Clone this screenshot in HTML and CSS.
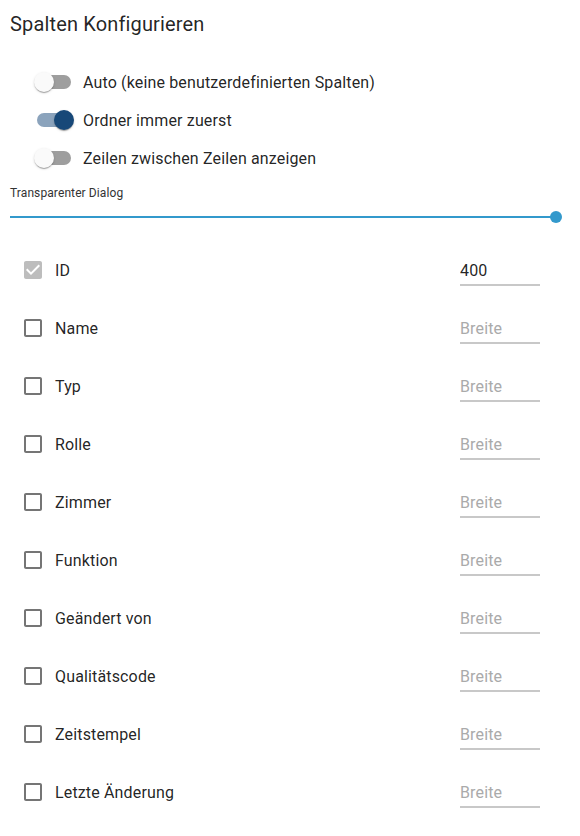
FILE: index.html
```html
<!DOCTYPE html>
<html lang="de">
<head>
    <meta charset="UTF-8">
    <meta name="viewport" content="width=device-width, initial-scale=1.0">
    <title>Spalten Konfigurieren</title>
    <link rel="stylesheet" href="styles.css">
</head>
<body>
    <div class="dialog">
        <h2 class="dialog-title">Spalten Konfigurieren</h2>

        <div class="switches">
            <label class="switch-row">
                <span class="switch"><span class="track"></span><span class="thumb"></span></span>
                <span class="switch-label">Auto (keine benutzerdefinierten Spalten)</span>
            </label>
            <label class="switch-row">
                <span class="switch on"><span class="track"></span><span class="thumb"></span></span>
                <span class="switch-label">Ordner immer zuerst</span>
            </label>
            <label class="switch-row">
                <span class="switch"><span class="track"></span><span class="thumb"></span></span>
                <span class="switch-label">Zeilen zwischen Zeilen anzeigen</span>
            </label>
        </div>

        <div class="slider-block">
            <div class="slider-label">Transparenter Dialog</div>
            <div class="slider">
                <div class="slider-track"></div>
                <span class="slider-thumb"></span>
            </div>
        </div>

        <div class="columns">
            <div class="column-row">
                <svg class="checkbox disabled" viewBox="0 0 24 24"><path d="M19 3H5c-1.11 0-2 .9-2 2v14c0 1.1.89 2 2 2h14c1.11 0 2-.9 2-2V5c0-1.1-.89-2-2-2zm-9 14l-5-5 1.41-1.41L10 14.17l7.59-7.59L19 8l-7 7z"/></svg>
                <span class="column-name">ID</span>
                <div class="width-field"><input type="text" value="400" placeholder="Breite"></div>
            </div>
            <div class="column-row">
                <svg class="checkbox" viewBox="0 0 24 24"><path d="M19 5v14H5V5h14m0-2H5c-1.11 0-2 .9-2 2v14c0 1.1.89 2 2 2h14c1.11 0 2-.9 2-2V5c0-1.1-.89-2-2-2z"/></svg>
                <span class="column-name">Name</span>
                <div class="width-field"><input type="text" placeholder="Breite"></div>
            </div>
            <div class="column-row">
                <svg class="checkbox" viewBox="0 0 24 24"><path d="M19 5v14H5V5h14m0-2H5c-1.11 0-2 .9-2 2v14c0 1.1.89 2 2 2h14c1.11 0 2-.9 2-2V5c0-1.1-.89-2-2-2z"/></svg>
                <span class="column-name">Typ</span>
                <div class="width-field"><input type="text" placeholder="Breite"></div>
            </div>
            <div class="column-row">
                <svg class="checkbox" viewBox="0 0 24 24"><path d="M19 5v14H5V5h14m0-2H5c-1.11 0-2 .9-2 2v14c0 1.1.89 2 2 2h14c1.11 0 2-.9 2-2V5c0-1.1-.89-2-2-2z"/></svg>
                <span class="column-name">Rolle</span>
                <div class="width-field"><input type="text" placeholder="Breite"></div>
            </div>
            <div class="column-row">
                <svg class="checkbox" viewBox="0 0 24 24"><path d="M19 5v14H5V5h14m0-2H5c-1.11 0-2 .9-2 2v14c0 1.1.89 2 2 2h14c1.11 0 2-.9 2-2V5c0-1.1-.89-2-2-2z"/></svg>
                <span class="column-name">Zimmer</span>
                <div class="width-field"><input type="text" placeholder="Breite"></div>
            </div>
            <div class="column-row">
                <svg class="checkbox" viewBox="0 0 24 24"><path d="M19 5v14H5V5h14m0-2H5c-1.11 0-2 .9-2 2v14c0 1.1.89 2 2 2h14c1.11 0 2-.9 2-2V5c0-1.1-.89-2-2-2z"/></svg>
                <span class="column-name">Funktion</span>
                <div class="width-field"><input type="text" placeholder="Breite"></div>
            </div>
            <div class="column-row">
                <svg class="checkbox" viewBox="0 0 24 24"><path d="M19 5v14H5V5h14m0-2H5c-1.11 0-2 .9-2 2v14c0 1.1.89 2 2 2h14c1.11 0 2-.9 2-2V5c0-1.1-.89-2-2-2z"/></svg>
                <span class="column-name">Geändert von</span>
                <div class="width-field"><input type="text" placeholder="Breite"></div>
            </div>
            <div class="column-row">
                <svg class="checkbox" viewBox="0 0 24 24"><path d="M19 5v14H5V5h14m0-2H5c-1.11 0-2 .9-2 2v14c0 1.1.89 2 2 2h14c1.11 0 2-.9 2-2V5c0-1.1-.89-2-2-2z"/></svg>
                <span class="column-name">Qualitätscode</span>
                <div class="width-field"><input type="text" placeholder="Breite"></div>
            </div>
            <div class="column-row">
                <svg class="checkbox" viewBox="0 0 24 24"><path d="M19 5v14H5V5h14m0-2H5c-1.11 0-2 .9-2 2v14c0 1.1.89 2 2 2h14c1.11 0 2-.9 2-2V5c0-1.1-.89-2-2-2z"/></svg>
                <span class="column-name">Zeitstempel</span>
                <div class="width-field"><input type="text" placeholder="Breite"></div>
            </div>
            <div class="column-row">
                <svg class="checkbox" viewBox="0 0 24 24"><path d="M19 5v14H5V5h14m0-2H5c-1.11 0-2 .9-2 2v14c0 1.1.89 2 2 2h14c1.11 0 2-.9 2-2V5c0-1.1-.89-2-2-2z"/></svg>
                <span class="column-name">Letzte Änderung</span>
                <div class="width-field"><input type="text" placeholder="Breite"></div>
            </div>
        </div>
    </div>
</body>
</html>
```

FILE: styles.css
```css
body {
    margin: 0;
    padding: 0;
    background-color: #fff;
    font-family: Roboto, "Liberation Sans", Arial, sans-serif;
    color: rgba(0, 0, 0, 0.87);
}
.dialog {
    width: 580px;
    padding-top: 8px;
}
.dialog-title {
    margin: 0 0 23px 0;
    padding: 0 10px;
    font-size: 20px;
    font-weight: 400;
    line-height: 32px;
    letter-spacing: 0.15px;
}

/* switches */
.switches {
    display: flex;
    flex-direction: column;
    padding-left: 25px;
}
.switch-row {
    display: flex;
    align-items: center;
    height: 38px;
    cursor: pointer;
}
.switch {
    position: relative;
    width: 58px;
    height: 38px;
    flex-shrink: 0;
}
.switch .track {
    position: absolute;
    left: 12px;
    top: 12px;
    width: 34px;
    height: 14px;
    border-radius: 7px;
    background-color: #9e9e9e;
}
.switch .thumb {
    position: absolute;
    left: 9px;
    top: 9px;
    width: 20px;
    height: 20px;
    border-radius: 50%;
    background-color: #fafafa;
    box-shadow: 0 2px 1px -1px rgba(0, 0, 0, 0.2), 0 1px 1px 0 rgba(0, 0, 0, 0.14), 0 1px 3px 0 rgba(0, 0, 0, 0.12);
}
.switch.on .track {
    background-color: #8ba3bc;
}
.switch.on .thumb {
    left: 29px;
    background-color: #174878;
}
.switch-label {
    font-size: 16px;
    line-height: 19px;
    letter-spacing: 0.15px;
}

/* slider */
.slider-block {
    padding: 0 24px 0 10px;
    margin-top: 7px;
}
.slider-label {
    font-size: 12px;
    line-height: 18px;
    letter-spacing: 0.1px;
    color: #333;
}
.slider {
    position: relative;
    margin-top: 2px;
    padding: 12px 0;
}
.slider-track {
    height: 2px;
    background-color: #3399cc;
}
.slider-thumb {
    position: absolute;
    right: -6px;
    top: 7px;
    width: 12px;
    height: 12px;
    border-radius: 50%;
    background-color: #3399cc;
}

/* column list */
.columns {
    margin-top: 11px;
    padding-right: 40px;
}
.column-row {
    display: flex;
    align-items: center;
    height: 58px;
}
.checkbox {
    width: 24px;
    height: 24px;
    margin-left: 21px;
    margin-right: 10px;
    fill: #757575;
    flex-shrink: 0;
}
.checkbox.disabled {
    fill: #bdbdbd;
}
.column-name {
    font-size: 16px;
    line-height: 19px;
    letter-spacing: 0.15px;
}
.width-field {
    margin-left: auto;
    width: 80px;
    padding: 7px 0 4px 0;
    border-bottom: 2px solid #c8c8c8;
}
.width-field input {
    display: block;
    width: 100%;
    height: 19px;
    margin: 0;
    padding: 0;
    border: none;
    outline: none;
    background: transparent;
    font-family: inherit;
    font-size: 16px;
    line-height: 19px;
    letter-spacing: 0.15px;
    color: rgba(0, 0, 0, 0.87);
}
.width-field input::placeholder {
    color: #aaa;
    opacity: 1;
}
```
